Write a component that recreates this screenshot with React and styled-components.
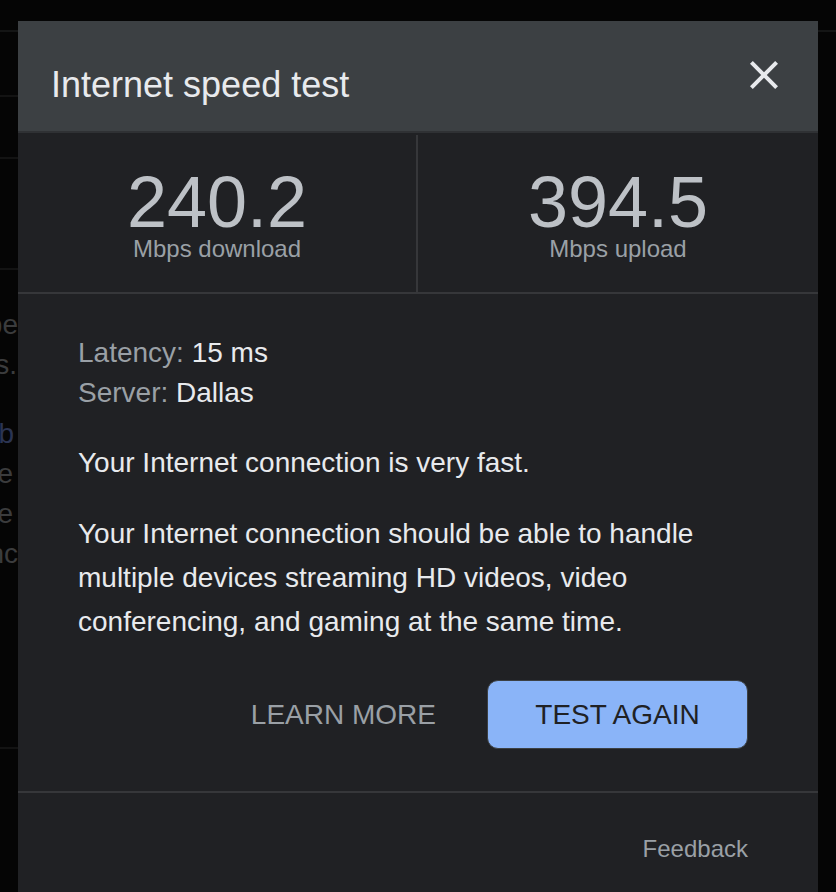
import React from "react";
import styled, { createGlobalStyle } from "styled-components";

const GlobalStyle = createGlobalStyle`
  html, body {
    margin: 0;
    padding: 0;
    background: #050505;
    font-family: "Liberation Sans", Arial, sans-serif;
  }
  body {
    width: 836px;
    height: 892px;
    overflow: hidden;
  }
`;

const Page = styled.div`
  position: relative;
  width: 836px;
  height: 892px;
  overflow: hidden;
  background: #050505;
`;

const TopBar = styled.div`
  height: 30px;
  border-bottom: 2px solid #141515;
`;

const SideColumn = styled.div`
  width: 18px;
  overflow: hidden;
  display: flex;
  flex-direction: column;
`;

const SideBlock = styled.div`
  height: ${p => p.h}px;
  border-bottom: 2px solid #131313;
  box-sizing: border-box;
`;

const SideText = styled.div`
  padding-top: 35px;
  display: flex;
  flex-direction: column;
  gap: 29px;
`;

const SidePara = styled.div`
  display: flex;
  flex-direction: column;
  align-items: flex-end;
`;

const Fragment = styled.div`
  font-size: 28px;
  line-height: 40px;
  white-space: nowrap;
  padding-right: ${p => p.pad || 0}px;
  color: ${p => (p.link ? "#2b3452" : "#3b3c3d")};
`;

const Modal = styled.div`
  position: absolute;
  top: 21px;
  left: 18px;
  width: 800px;
  height: 900px;
  background: #202124;
  display: flex;
  flex-direction: column;
`;

const Header = styled.div`
  height: 112px;
  box-sizing: border-box;
  background: #3c4043;
  border-bottom: 2px solid #2f3134;
  display: flex;
  align-items: flex-start;
  justify-content: space-between;
  padding: 30px 30px 0 33px;
`;

const Title = styled.h1`
  margin: 14px 0 0;
  font-size: 36px;
  line-height: 40px;
  font-weight: 400;
  color: #e8eaed;
`;

const CloseButton = styled.button`
  width: 48px;
  height: 48px;
  padding: 0;
  border: none;
  background: none;
  color: #e8eaed;
  display: flex;
  svg {
    width: 48px;
    height: 48px;
  }
`;

const Stats = styled.div`
  display: grid;
  grid-template-columns: 1fr 1fr;
  border-bottom: 2px solid #36373a;
  margin-top: 2px;
`;

const Stat = styled.div`
  display: flex;
  flex-direction: column;
  align-items: center;
  padding: 35px 0 29px;
  border-right: ${p => (p.divider ? "2px solid #36373a" : "none")};
`;

const StatValue = styled.div`
  font-size: 72px;
  line-height: 64px;
  color: #bdc1c6;
`;

const StatLabel = styled.div`
  margin-top: 3px;
  font-size: 24px;
  line-height: 24px;
  padding-bottom: 2px;
  color: #9aa0a6;
`;

const Body = styled.div`
  padding: 39px 70px 42px 60px;
  border-bottom: 2px solid #36373a;
`;

const InfoList = styled.div`
  font-size: 28px;
  line-height: 40px;
`;

const InfoLabel = styled.span`
  color: #9aa0a6;
`;

const InfoValue = styled.span`
  color: #e8eaed;
`;

const Paragraph = styled.p`
  margin: ${p => p.top}px 0 0;
  font-size: 28px;
  line-height: 44px;
  color: #e8eaed;
`;

const Actions = styled.div`
  margin-top: 36px;
  display: flex;
  justify-content: flex-end;
  align-items: center;
  gap: 27px;
`;

const TextButton = styled.button`
  border: none;
  background: none;
  padding: 0 24px;
  font-family: inherit;
  font-size: 28px;
  color: #9aa0a6;
  height: 69px;
`;

const PrimaryButton = styled.button`
  height: 69px;
  width: 261px;
  border: 1px solid #3c4043;
  border-radius: 11px;
  background: #8ab4f8;
  font-family: inherit;
  font-size: 28px;
  color: #202124;
  padding: 0;
`;

const Footer = styled.div`
  display: flex;
  justify-content: flex-end;
  padding: 42px 70px 0 0;
`;

const FooterLink = styled.a`
  font-size: 24px;
  line-height: 28px;
  color: #9aa0a6;
  text-decoration: none;
`;

const CloseIcon = () => (
  <svg viewBox="0 0 24 24" fill="currentColor">
    <path d="M19 6.41L17.59 5 12 10.59 6.41 5 5 6.41 10.59 12 5 17.59 6.41 19 12 13.41 17.59 19 19 17.59 13.41 12z" />
  </svg>
);

const stats = [
  { value: "240.2", label: "Mbps download" },
  { value: "394.5", label: "Mbps upload" }
];

const App = () => {
  return (
    <Page>
      <GlobalStyle />
      <TopBar />
      <SideColumn>
        <SideBlock h={65} />
        <SideBlock h={62} />
        <SideBlock h={111} />
        <SideBlock h={479}>
          <SideText>
            <SidePara>
              <Fragment>spe</Fragment>
              <Fragment pad={1}>ts.</Fragment>
            </SidePara>
            <SidePara>
              <Fragment link pad={4}>Web</Fragment>
              <Fragment pad={5}>the</Fragment>
              <Fragment pad={5}>the</Fragment>
              <Fragment>anc</Fragment>
            </SidePara>
          </SideText>
        </SideBlock>
      </SideColumn>

      <Modal>
        <Header>
          <Title>Internet speed test</Title>
          <CloseButton aria-label="Close">
            <CloseIcon />
          </CloseButton>
        </Header>

        <Stats>
          {stats.map((s, i) => (
            <Stat key={s.label} divider={i === 0}>
              <StatValue>{s.value}</StatValue>
              <StatLabel>{s.label}</StatLabel>
            </Stat>
          ))}
        </Stats>

        <Body>
          <InfoList>
            <div>
              <InfoLabel>Latency: </InfoLabel>
              <InfoValue>15 ms</InfoValue>
            </div>
            <div>
              <InfoLabel>Server: </InfoLabel>
              <InfoValue>Dallas</InfoValue>
            </div>
          </InfoList>
          <Paragraph top={28}>Your Internet connection is very fast.</Paragraph>
          <Paragraph top={27}>
            Your Internet connection should be able to handle multiple devices
            streaming HD videos, video conferencing, and gaming at the same time.
          </Paragraph>
          <Actions>
            <TextButton>LEARN MORE</TextButton>
            <PrimaryButton>TEST AGAIN</PrimaryButton>
          </Actions>
        </Body>

        <Footer>
          <FooterLink href="#">Feedback</FooterLink>
        </Footer>
      </Modal>
    </Page>
  );
};

export default App;
